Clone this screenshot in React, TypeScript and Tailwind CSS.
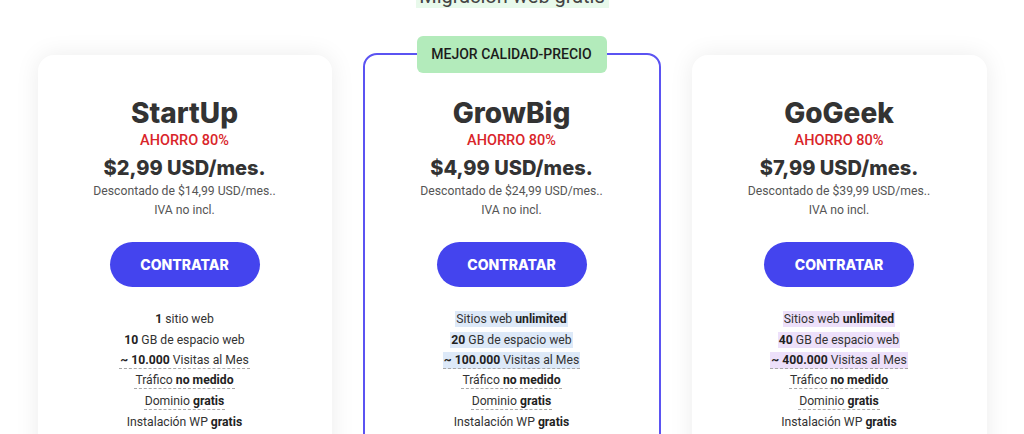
import React from 'react'

type TFeature = {
  parts: { text: string; bold?: boolean }[]
  dotted?: boolean
  mark?: boolean
}

type TPlan = {
  name: string
  price: string
  before: string
  features: TFeature[]
  featured?: boolean
  markClass: string
}

const headFont = { fontFamily: 'Inter, "Open Sans", sans-serif' }

const common = (visits: string, sites: TFeature['parts'], gb: string, marked: boolean): TFeature[] => [
  { parts: sites, mark: marked },
  { parts: [{ text: gb, bold: true }, { text: ' GB de espacio web' }], mark: marked },
  { parts: [{ text: `~ ${visits}`, bold: true }, { text: ' Visitas al Mes' }], dotted: true, mark: marked },
  { parts: [{ text: 'Tráfico ' }, { text: 'no medido', bold: true }], dotted: true },
  { parts: [{ text: 'Dominio ' }, { text: 'gratis', bold: true }], dotted: true },
  { parts: [{ text: 'Instalación WP ' }, { text: 'gratis', bold: true }] },
]

const plans: TPlan[] = [
  {
    name: 'StartUp',
    price: '$2,99 USD/mes.',
    before: 'Descontado de $14,99 USD/mes..',
    markClass: '',
    features: common('10.000', [{ text: '1', bold: true }, { text: ' sitio web' }], '10', false),
  },
  {
    name: 'GrowBig',
    price: '$4,99 USD/mes.',
    before: 'Descontado de $24,99 USD/mes..',
    featured: true,
    markClass: 'bg-[#dde9f8]',
    features: common('100.000', [{ text: 'Sitios web ' }, { text: 'unlimited', bold: true }], '20', true),
  },
  {
    name: 'GoGeek',
    price: '$7,99 USD/mes.',
    before: 'Descontado de $39,99 USD/mes..',
    markClass: 'bg-[#ede0fa]',
    features: common('400.000', [{ text: 'Sitios web ' }, { text: 'unlimited', bold: true }], '40', true),
  },
]

const PlanCard = ({ plan }: { plan: TPlan }) => (
  <div
    className={
      plan.featured
        ? 'relative h-[420px] rounded-[14px] border-2 border-[#5b53f2] bg-white px-4 pt-[41px]'
        : 'mt-[2px] h-[420px] rounded-[16px] bg-white px-4 pt-[41px] shadow-[0_0_24px_rgba(0,0,0,0.08)]'
    }
  >
    {plan.featured && (
      <div className="absolute -top-[19px] left-1/2 flex h-[37px] w-[190px] -translate-x-1/2 items-center justify-center rounded-[6px] bg-[#b3ebbb] text-[14px] font-medium text-[#1c1c1c]">
        MEJOR CALIDAD-PRECIO
      </div>
    )}
    <div className="flex flex-col items-center text-center">
      <h2 className="text-[28px] leading-[34px] font-extrabold text-[#333]" style={headFont}>
        {plan.name}
      </h2>
      <div className="mt-[1px] text-[14.5px] leading-[20px] font-medium text-[#d9252a]">AHORRO 80%</div>
      <div className="mt-[5px] text-[20px] leading-[24px] font-extrabold text-[#333]" style={headFont}>
        {plan.price}
      </div>
      <div className="mt-[2px] text-[12.2px] leading-[19px] text-[#555]">
        <div>{plan.before}</div>
        <div>IVA no incl.</div>
      </div>
      <button
        className="mt-[22px] flex h-[45px] w-[150px] items-center justify-center rounded-full bg-[#4444ee] text-[14px] font-extrabold text-white"
        style={headFont}
      >
        CONTRATAR
      </button>
      <ul className="mt-[22px] flex flex-col items-center text-[12.2px] text-[#333]">
        {plan.features.map((f, i) => (
          <li key={i} className="flex h-[20.5px] items-center justify-center">
            <span
              className={[
                'inline-block px-[1px] leading-[16px]',
                f.dotted ? 'border-b border-dashed border-[#a8a8a8]' : '',
                f.mark ? plan.markClass : '',
              ].join(' ')}
            >
              {f.parts.map((p, j) => (
                <span key={j} className={p.bold ? 'font-bold text-[#222]' : ''}>
                  {p.text}
                </span>
              ))}
            </span>
          </li>
        ))}
      </ul>
    </div>
  </div>
)

const App = () => {
  return (
    <div
      className="h-[434px] w-full overflow-hidden bg-white"
      style={{ fontFamily: 'Roboto, "Liberation Sans", sans-serif' }}
    >
      <div className="flex justify-center">
        <div className="-mt-[16px] h-[24px] w-[193px] bg-[#e8f9eb] text-center text-[20px] leading-[24px] text-[#444]">
          Migración web gratis
        </div>
      </div>
      <div className="mx-auto mt-[45px] grid w-[949px] grid-cols-[294px_298px_295px] items-start gap-[31px]">
        {plans.map(plan => (
          <PlanCard plan={plan} key={plan.name} />
        ))}
      </div>
    </div>
  )
}

export default App
